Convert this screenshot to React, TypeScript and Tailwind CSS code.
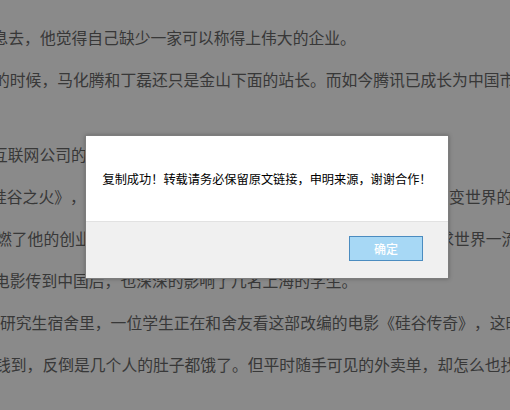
const lines = [
  { text: "息去，他觉得自己缺少一家可以称得上伟大的企业。", offset: "ml-[-7.5px]" },
  { text: "的时候，马化腾和丁磊还只是金山下面的站长。而如今腾讯已成长为中国市值最高的公司。", offset: "ml-[-6px]" },
  { text: "互联网公司的创始人。", offset: "ml-[-8px] mt-[33px]" },
  { text: "硅谷之火》，这本书讲述了两位年轻人在车库里创办苹果公司并改变世界的故事。", offset: "ml-[-9px]" },
  { text: "燃了他的创业梦想，他希望有一天自己也能够像他们一样，去追求世界一流的事业。", offset: "ml-[-4px]" },
  { text: "电影传到中国后，也深深的影响了几名上海的学生。", offset: "ml-[-6px]" },
  { text: "研究生宿舍里，一位学生正在和舍友看这部改编的电影《硅谷传奇》，这时候", offset: "ml-[0px]" },
  { text: "钱到，反倒是几个人的肚子都饿了。但平时随手可见的外卖单，却怎么也找不到。", offset: "ml-[-5px]" },
];

export default function App() {
  return (
    <div className="relative w-[510px] h-[410px] overflow-hidden bg-white font-['Noto_Sans_CJK_SC',sans-serif] [text-spacing-trim:space-all]">
      <div className="flex flex-col pt-[17px] text-[15.8px] text-[#686868]">
        {lines.map((line, i) => (
          <div key={i} className={`h-[42px] leading-[42px] whitespace-nowrap ${line.offset}`}>
            {line.text}
          </div>
        ))}
      </div>

      {/* mask + dialog */}
      <div className="absolute inset-0 bg-black/[0.46] flex items-start pl-[85px] pt-[135px]">
        <div className="w-[364px] flex flex-col bg-white border border-[#7d7d7d] shadow-[0_0_4px_rgba(0,0,0,0.25)]">
          <div className="h-[85px] flex items-center justify-center text-[12.2px] text-black pt-[2px]">
            复制成功！转载请务必保留原文链接，申明来源，谢谢合作！
          </div>
          <div className="h-[57px] bg-[#f0f0f0] border-t border-[#e2e2e2] flex items-start justify-end pt-[14px] pr-[25px]">
            <button className="w-[74px] h-[25px] bg-[#a7d8f5] border border-[#4b8cc0] text-white text-[12px] font-medium leading-none flex items-center justify-center">
              确定
            </button>
          </div>
        </div>
      </div>
    </div>
  );
}
